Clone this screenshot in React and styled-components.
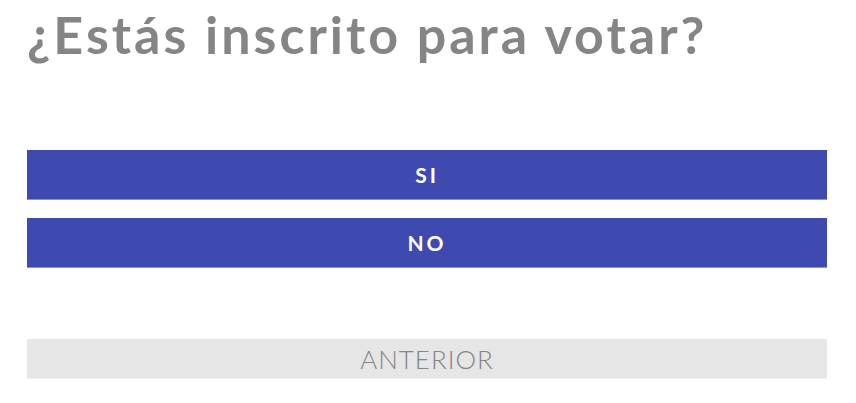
import React from 'react';
import styled, { createGlobalStyle } from 'styled-components';

const GlobalStyle = createGlobalStyle`
  html, body {
    margin: 0;
    padding: 0;
    background: #fff;
  }
  body {
    font-family: Lato, "Open Sans", sans-serif;
  }
`;

const Page = styled.div`
  width: 800px;
  padding: 0 29px 0 27px;
  display: flex;
  flex-direction: column;
`;

const Title = styled.h1`
  margin: 0;
  padding-top: 4px;
  font-family: Lato, sans-serif;
  font-weight: 700;
  font-size: 52px;
  line-height: 60px;
  color: #858585;
  letter-spacing: 3px;
`;

const Options = styled.div`
  display: flex;
  flex-direction: column;
  gap: 18px;
  margin-top: 86px;
`;

const Choice = styled.button`
  height: 50px;
  border: none;
  border-bottom: 1px solid #8a90d6;
  background: #3f4ab1;
  color: #fff;
  font-family: Lato, sans-serif;
  font-weight: 700;
  font-size: 21px;
  letter-spacing: 3px;
  cursor: pointer;
  padding: 0;
`;

const Back = styled.button`
  margin-top: 71px;
  height: 40px;
  border: none;
  border-bottom: 1px solid #f2f2f2;
  background: #e6e6e6;
  color: #858585;
  font-family: Lato, sans-serif;
  font-weight: 300;
  font-size: 26px;
  letter-spacing: 1px;
  padding: 0;
  cursor: pointer;
`;

export default function App() {
  return (
    <>
      <GlobalStyle />
      <Page>
        <Title>¿Estás inscrito para votar?</Title>
        <Options>
          <Choice>SI</Choice>
          <Choice>NO</Choice>
        </Options>
        <Back>ANTERIOR</Back>
      </Page>
    </>
  );
}
